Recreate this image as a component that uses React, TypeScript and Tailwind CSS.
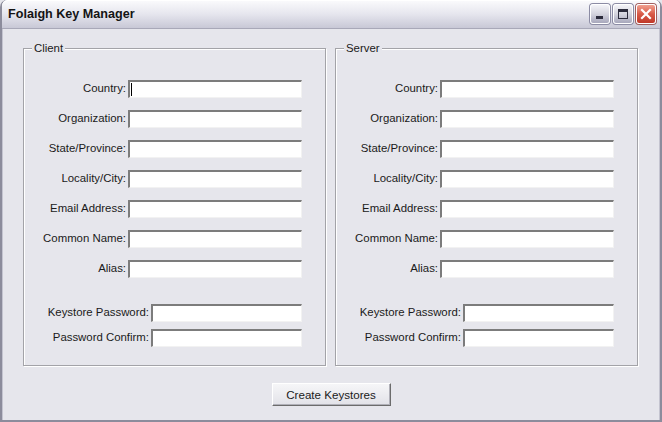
import React from "react";

const font = { fontFamily: '"Liberation Sans", Arial, sans-serif' };

function Field({ label, width, caret }: { label: string; width: string; caret?: boolean }) {
  return (
    <div className="flex h-[18px] items-center justify-end gap-[2px]">
      <span className="text-[11.4px] leading-none text-[#1a1a1a]">{label}</span>
      <div
        className={`relative h-[18px] ${width} flex-none border-t-2 border-l-2 border-r border-b border-t-[#7c7c7c] border-l-[#7c7c7c] border-r-[#f2f2f2] border-b-[#f2f2f2] bg-white`}
      >
        {caret && <span className="absolute left-[1px] top-[1px] h-[13px] w-px bg-black" />}
      </div>
    </div>
  );
}

function Group({ title, caret }: { title: string; caret?: boolean }) {
  const top = ["Country:", "Organization:", "State/Province:", "Locality/City:", "Email Address:", "Common Name:", "Alias:"];
  return (
    <div className="relative h-[318px] w-[303px] border border-[#a3a3a8] pr-[23px] pt-[31px] shadow-[inset_1px_1px_0_#fff,1px_1px_0_#fff]">
      <span className="absolute left-[8px] top-[-8px] bg-[#e6e6ec] px-[2px] text-[11.4px] leading-[14px] text-[#1a1a1a]">
        {title}
      </span>
      <div className="flex flex-col gap-[12px]">
        {top.map((l, i) => (
          <Field key={l} label={l} width="w-[174px]" caret={caret && i === 0} />
        ))}
      </div>
      <div className="mt-[26px] flex flex-col gap-[7px]">
        <Field label="Keystore Password:" width="w-[151px]" />
        <Field label="Password Confirm:" width="w-[151px]" />
      </div>
    </div>
  );
}

function TitleButton({ kind }: { kind: "min" | "max" | "close" }) {
  if (kind === "close") {
    return (
      <div className="flex h-[20px] w-[20px] items-center justify-center rounded-[3px] border border-white bg-gradient-to-b from-[#f0a090] via-[#d85a48] to-[#c03828] shadow-[0_0_0_1px_#a06060]">
        <svg width="12" height="12" viewBox="0 0 12 12">
          <path d="M2 2 L10 10 M10 2 L2 10" stroke="#fff" strokeWidth="2.2" strokeLinecap="square" />
        </svg>
      </div>
    );
  }
  return (
    <div className="flex h-[20px] w-[20px] items-center justify-center rounded-[3px] border border-white bg-gradient-to-b from-[#f4f4f8] via-[#d4d4de] to-[#a8a8bc] shadow-[0_0_0_1px_#8c8ca4]">
      {kind === "min" ? (
        <div className="mt-[8px] mr-[2px] h-[3px] w-[7px] bg-[#2c2c3c]" />
      ) : (
        <div className="h-[10px] w-[10px] border border-t-[3px] border-[#2c2c3c]" />
      )}
    </div>
  );
}

export default function App() {
  return (
    <div style={font} className="h-[422px] w-[662px] overflow-hidden bg-[#e6e6ec]">
      <div className="flex h-full flex-col rounded-t-[7px] border-[2px] border-t-0 border-[#8c8c9c]">
        <div className="flex h-[29px] flex-none items-center justify-between rounded-t-[6px] border-b border-[#a8a8b8] bg-gradient-to-b from-[#fbfbfd] via-[#e6e6ee] to-[#c8c8d6] pl-[6px] pr-[4px] shadow-[inset_0_1px_0_#fff]">
          <span className="text-[12.6px] font-bold text-[#141414]">Folaigh Key Manager</span>
          <div className="flex gap-[3px] pb-[1px]">
            <TitleButton kind="min" />
            <TitleButton kind="max" />
            <TitleButton kind="close" />
          </div>
        </div>
        <div className="flex flex-1 flex-col border-l border-r border-[#c4c4d0] pl-[20px] pt-[19px]">
          <div className="flex gap-[9px]">
            <Group title="Client" caret />
            <Group title="Server" />
          </div>
          <div className="mt-[17px] flex justify-center pr-[20px]">
            <button className="h-[23px] w-[119px] border border-t-white border-l-white border-r-[#6c6c6c] border-b-[#6c6c6c] bg-gradient-to-b from-[#f6f6f8] to-[#e2e2e8] text-[11.6px] text-[#1a1a1a] shadow-[inset_-1px_-1px_0_#b0b0b8]">
              Create Keystores
            </button>
          </div>
        </div>
      </div>
    </div>
  );
}
